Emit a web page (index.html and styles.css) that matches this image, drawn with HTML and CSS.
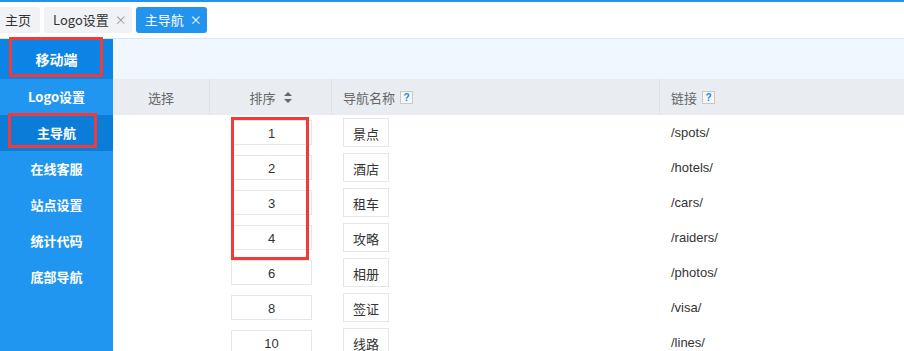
FILE: index.html
```html
<!DOCTYPE html>
<html lang="zh-CN">
<head>
    <meta charset="UTF-8">
    <title>主导航</title>
    <link rel="stylesheet" href="styles.css">
</head>
<body>
    <div class="topline"></div>
    <div class="tabs">
        <div class="tab first">主页</div>
        <div class="tab">Logo设置<span class="close">×</span></div>
        <div class="tab active">主导航<span class="close">×</span></div>
    </div>
    <div class="main">
        <div class="sidebar">
            <div class="side-title">移动端</div>
            <div class="side-item">Logo设置</div>
            <div class="side-item current">主导航</div>
            <div class="side-item">在线客服</div>
            <div class="side-item">站点设置</div>
            <div class="side-item">统计代码</div>
            <div class="side-item">底部导航</div>
            <div class="mark mark-title"></div>
            <div class="mark mark-nav"></div>
        </div>
        <div class="content">
            <div class="band"></div>
            <div class="table">
                <div class="row head">
                    <div class="c c-sel">选择</div>
                    <div class="c c-sort">排序 <svg class="sort" width="8" height="11" viewBox="0 0 8 11"><path d="M4 0L8 4H0Z M4 11L0 7H8Z" fill="#666"/></svg></div>
                    <div class="c c-name">导航名称 <span class="help">?</span></div>
                    <div class="c c-link">链接 <span class="help">?</span></div>
                </div>
                <div class="row"><div class="c c-sel"></div><div class="c c-sort"><div class="num">1</div></div><div class="c c-name"><div class="name">景点</div></div><div class="c c-link">/spots/</div></div>
                <div class="row"><div class="c c-sel"></div><div class="c c-sort"><div class="num">2</div></div><div class="c c-name"><div class="name">酒店</div></div><div class="c c-link">/hotels/</div></div>
                <div class="row"><div class="c c-sel"></div><div class="c c-sort"><div class="num">3</div></div><div class="c c-name"><div class="name">租车</div></div><div class="c c-link">/cars/</div></div>
                <div class="row"><div class="c c-sel"></div><div class="c c-sort"><div class="num">4</div></div><div class="c c-name"><div class="name">攻略</div></div><div class="c c-link">/raiders/</div></div>
                <div class="row"><div class="c c-sel"></div><div class="c c-sort"><div class="num">6</div></div><div class="c c-name"><div class="name">相册</div></div><div class="c c-link">/photos/</div></div>
                <div class="row"><div class="c c-sel"></div><div class="c c-sort"><div class="num">8</div></div><div class="c c-name"><div class="name">签证</div></div><div class="c c-link">/visa/</div></div>
                <div class="row"><div class="c c-sel"></div><div class="c c-sort"><div class="num">10</div></div><div class="c c-name"><div class="name">线路</div></div><div class="c c-link">/lines/</div></div>
                <div class="mark mark-sort"></div>
            </div>
        </div>
    </div>
</body>
</html>
```

FILE: styles.css
```css
body {
    margin: 0;
    font-family: "Liberation Sans", "Noto Sans CJK SC", sans-serif;
    font-size: 13px;
    color: #333;
    background: #fff;
    overflow: hidden;
}
.topline {
    height: 2px;
    background: #2394ee;
}
.tabs {
    height: 36px;
    border-bottom: 1px solid #dfe5ee;
    display: flex;
    align-items: center;
    gap: 4px;
}
.tab {
    height: 26px;
    line-height: 26px;
    padding: 0 5px 0 9px;
    background: #f0f2f5;
    border-radius: 3px;
    color: #333;
    font-family: "Noto Sans CJK SC", sans-serif;
}
.tab.first {
    margin-left: -4px;
    padding-right: 9px;
}
.tab.active {
    background: #2394ee;
    color: #fff;
}
.close {
    color: #999;
    margin-left: 6px;
    font-size: 12px;
}
.tab.active .close {
    color: #fff;
}
.main {
    display: flex;
    height: 312px;
}
.sidebar {
    width: 113px;
    background: #2196f0;
    position: relative;
    color: #fff;
    font-family: "Noto Sans CJK SC", sans-serif;
}
.side-title {
    height: 40px;
    line-height: 40px;
    text-align: center;
    background: #0b84e6;
    font-weight: bold;
    font-size: 14px;
}
.side-item {
    height: 36px;
    line-height: 36px;
    text-align: center;
    font-weight: bold;
    font-size: 13px;
}
.side-item.current {
    background: #0b7dd9;
}
.mark {
    position: absolute;
    border: 3px solid #f23a3a;
    box-sizing: border-box;
}
.mark-title {
    left: 9px;
    top: -2px;
    width: 94px;
    height: 40px;
}
.mark-nav {
    left: 8px;
    top: 74px;
    width: 89px;
    height: 35px;
}
.content {
    flex: 1;
}
.band {
    height: 40px;
    background: #f0f7fe;
}
.table {
    position: relative;
}
.row {
    display: flex;
    height: 35px;
    align-items: center;
}
.row.head {
    height: 36px;
    background: #e9edf2;
    color: #666;
    font-family: "Noto Sans CJK SC", sans-serif;
}
.c {
    box-sizing: border-box;
    height: 100%;
    display: flex;
    align-items: center;
}
.head .c {
    border-right: 1px solid #dde2e9;
}
.c-sel {
    width: 97px;
    justify-content: center;
}
.c-sort {
    width: 122px;
    padding-left: 21px;
}
.head .c-sort {
    justify-content: center;
    padding-left: 0;
}
.c-name {
    width: 328px;
    padding-left: 11px;
}
.c-link {
    flex: 1;
    padding-left: 11px;
}
.head .c-link {
    border-right: none;
}
.sort {
    margin-left: 8px;
}
.help {
    display: inline-block;
    width: 11px;
    height: 11px;
    line-height: 11px;
    margin-left: 5px;
    border: 1px solid #c8c8c8;
    background: #f7f7f7;
    color: #1a8ae6;
    font-family: "Liberation Sans", sans-serif;
    font-weight: bold;
    font-size: 10px;
    text-align: center;
}
.num {
    width: 81px;
    height: 25px;
    line-height: 25px;
    border: 1px solid #e6e6e6;
    box-sizing: border-box;
    text-align: center;
    color: #333;
}
.name {
    width: 46px;
    height: 29px;
    line-height: 29px;
    border: 1px solid #e6e6e6;
    box-sizing: border-box;
    text-align: center;
    font-family: "Noto Sans CJK SC", sans-serif;
}
.mark-sort {
    left: 118px;
    top: 38px;
    width: 78px;
    height: 143px;
}
```
